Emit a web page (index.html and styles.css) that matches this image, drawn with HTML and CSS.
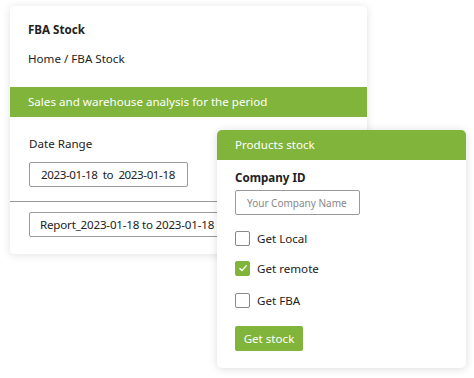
FILE: index.html
```html
<!DOCTYPE html>
<html lang="en">
<head>
    <meta charset="UTF-8">
    <meta name="viewport" content="width=device-width, initial-scale=1.0">
    <title>FBA Stock</title>
    <link rel="stylesheet" href="styles.css">
</head>
<body>
    <div class="scene">
        <div class="report-card">
            <div class="title">FBA Stock</div>
            <div class="crumbs">Home / FBA Stock</div>
            <div class="banner">Sales and warehouse analysis for the period</div>
            <div class="range">
                <div class="label">Date Range</div>
                <div class="date-box">2023-01-18 &nbsp;to &nbsp;2023-01-18</div>
            </div>
            <div class="files">
                <div class="file-box">Report_2023-01-18 to 2023-01-18 .csv</div>
            </div>
        </div>

        <div class="stock-card">
            <div class="stock-head">Products stock</div>
            <div class="stock-body">
                <div class="field-label">Company ID</div>
                <input type="text" class="company" placeholder="Your Company Name">
                <label class="check"><span class="box"></span>Get Local</label>
                <label class="check"><span class="box on">
                    <svg width="10" height="10" viewBox="0 0 10 10"><path d="M1.5 5.2 L4 7.6 L8.6 2.4" fill="none" stroke="#fff" stroke-width="1.4"/></svg>
                </span>Get remote</label>
                <label class="check"><span class="box"></span>Get FBA</label>
                <button class="get">Get stock</button>
            </div>
        </div>
    </div>
</body>
</html>
```

FILE: styles.css
```css
body {
    margin: 0;
    background: #fff;
    font-family: 'Noto Sans', 'Open Sans', sans-serif;
    font-size: 11.6px;
    color: #222;
}

.scene {
    position: relative;
    width: 474px;
    height: 378px;
}

.report-card {
    position: relative;
    top: 6px;
    left: 10px;
    width: 357px;
    height: 248px;
    background: #fff;
    border-radius: 4px;
    box-shadow: 0 1px 8px rgba(0, 0, 0, 0.12);
    overflow: hidden;
}

.title {
    padding: 16px 18px 0;
    font-weight: bold;
    height: 16px;
    line-height: 16px;
}

.crumbs {
    padding: 13px 18px 0;
    height: 16px;
    line-height: 16px;
}

.banner {
    margin-top: 20px;
    height: 30px;
    line-height: 30px;
    padding: 0 18px;
    background: #80b43a;
    color: #fff;
}

.range {
    padding: 19px 19px 0;
}

.label {
    line-height: 16px;
    height: 16px;
}

.date-box {
    margin-top: 10px;
    width: 146px;
    height: 23px;
    line-height: 23px;
    border: 1px solid #9a9a9a;
    border-radius: 2px;
    padding-left: 11px;
    letter-spacing: -0.4px;
    white-space: nowrap;
    overflow: hidden;
}

.files {
    margin-top: 14px;
    border-top: 1px solid #9a9a9a;
    padding: 10px 19px 0;
}

.file-box {
    width: 260px;
    height: 23px;
    line-height: 23px;
    border: 1px solid #9a9a9a;
    border-radius: 2px;
    padding-left: 10px;
    letter-spacing: -0.2px;
    white-space: nowrap;
    overflow: hidden;
}

.stock-card {
    position: absolute;
    left: 217px;
    top: 130px;
    width: 249px;
    height: 238px;
    background: #fff;
    border-radius: 5px;
    box-shadow: 0 1px 8px rgba(0, 0, 0, 0.14);
    overflow: hidden;
}

.stock-head {
    height: 30px;
    line-height: 30px;
    padding: 0 18px;
    background: #80b43a;
    color: #fff;
}

.stock-body {
    padding: 10px 18px 0;
}

.field-label {
    font-weight: bold;
    line-height: 16px;
}

.company {
    display: block;
    box-sizing: border-box;
    margin-top: 4px;
    width: 125px;
    height: 25px;
    border: 1px solid #9a9a9a;
    border-radius: 2px;
    padding: 0 11px;
    font-family: inherit;
    font-size: 10px;
}

.company::placeholder {
    color: #888;
}

.check {
    display: flex;
    align-items: center;
    gap: 7px;
    margin-top: 15px;
    height: 16px;
}

.check + .check {
    margin-top: 14px;
}

.check + .check + .check {
    margin-top: 16px;
}

.box {
    box-sizing: border-box;
    width: 15px;
    height: 15px;
    border: 1px solid #888;
    border-radius: 2px;
    display: flex;
    align-items: center;
    justify-content: center;
}

.box.on {
    background: #80b43a;
    border-color: #80b43a;
}

.get {
    margin-top: 18px;
    width: 68px;
    height: 25px;
    border: none;
    border-radius: 2px;
    background: #80b43a;
    color: #fff;
    font-family: inherit;
    font-size: 11.6px;
    padding: 0;
}
```
